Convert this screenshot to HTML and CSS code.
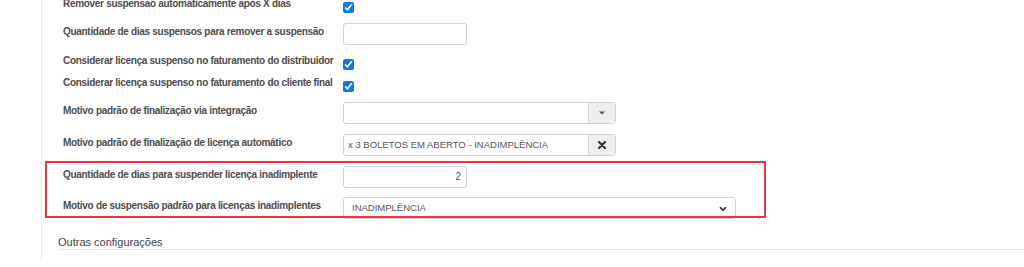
FILE: index.html
```html
<!DOCTYPE html>
<html lang="pt-BR">
<head>
<meta charset="utf-8">
<title>Configurações</title>
<link rel="stylesheet" href="styles.css">
</head>
<body>
<div class="panel">
  <div class="form">
    <div class="row row-check row-first gap-10">
      <label class="lbl">Remover suspensão automaticamente após X dias</label>
      <input type="checkbox" class="chk" checked>
    </div>
    <div class="row gap-7">
      <label class="lbl">Quantidade de dias suspensos para remover a suspensão</label>
      <div class="field field-sm"></div>
    </div>
    <div class="row row-check gap-4">
      <label class="lbl">Considerar licença suspenso no faturamento do distribuidor</label>
      <input type="checkbox" class="chk" checked>
    </div>
    <div class="row row-check gap-10">
      <label class="lbl">Considerar licença suspenso no faturamento do cliente final</label>
      <input type="checkbox" class="chk" checked>
    </div>
    <div class="row gap-10">
      <label class="lbl">Motivo padrão de finalização via integração</label>
      <div class="combo">
        <div class="combo-text"></div>
        <div class="combo-btn">
          <svg width="6" height="4" viewBox="0 0 6 4"><path d="M0 0.5h6L3 3.5z" fill="#555"/></svg>
        </div>
      </div>
    </div>
    <div class="row gap-10">
      <label class="lbl">Motivo padrão de finalização de licença automático</label>
      <div class="combo">
        <div class="combo-text">x 3 BOLETOS EM ABERTO - INADIMPLÊNCIA</div>
        <div class="combo-btn">
          <svg width="8" height="8" viewBox="0 0 8 8"><path d="M1 1L7 7M7 1L1 7" stroke="#333" stroke-width="2.2" stroke-linecap="round"/></svg>
        </div>
      </div>
    </div>
    <div class="row gap-9">
      <label class="lbl">Quantidade de dias para suspender licença inadimplente</label>
      <div class="field field-sm field-num">2</div>
    </div>
    <div class="row">
      <label class="lbl">Motivo de suspensão padrão para licenças inadimplentes</label>
      <div class="select">
        <span class="select-text">INADIMPLÊNCIA</span>
        <svg class="chev" width="8" height="6" viewBox="0 0 8 6"><path d="M1 1.2L4 4.2L7 1.2" fill="none" stroke="#444" stroke-width="1.8"/></svg>
      </div>
    </div>
  </div>
  <div class="section">Outras configurações</div>
  <div class="highlight"></div>
</div>
</body>
</html>
```

FILE: styles.css
```css
html, body {
  margin: 0;
  padding: 0;
  background: #fff;
  overflow: hidden;
}
body {
  width: 1024px;
  height: 267px;
  font-family: "Liberation Sans", Arial, sans-serif;
}
.panel {
  position: relative;
  margin-left: 41px;
  border-left: 1px solid #ececec;
  height: 267px;
  padding-left: 16px;
  box-sizing: border-box;
}
.form {
  padding-left: 5px;
}
.row {
  display: flex;
  align-items: flex-start;
}
.row-first {
  margin-top: -5px;
}
.gap-10 { margin-bottom: 10px; }
.gap-9 { margin-bottom: 9px; }
.gap-7 { margin-bottom: 7px; }
.gap-4 { margin-bottom: 4px; }
.lbl {
  width: 280px;
  flex: none;
  font-size: 10px;
  font-weight: bold;
  letter-spacing: -0.3px;
  line-height: 18px;
  color: #4d4d4d;
  white-space: nowrap;
}
.row-check {
  height: 18px;
}
.chk {
  margin: 7px 0 0 0;
  width: 11px;
  height: 11px;
  accent-color: #0b78f0;
}
.field {
  height: 22px;
  box-sizing: border-box;
  border: 1px solid #d2d2d2;
  border-radius: 3px;
  background: #fff;
}
.field-sm {
  width: 124px;
}
.field-num {
  text-align: right;
  font-size: 10px;
  line-height: 20px;
  color: #555;
  padding-right: 5px;
}
.combo {
  width: 273px;
  height: 22px;
  box-sizing: border-box;
  display: flex;
  border: 1px solid #d2d2d2;
  border-radius: 3px;
  overflow: hidden;
}
.combo-text {
  flex: 1;
  padding-left: 4px;
  font-size: 9.5px;
  line-height: 20px;
  color: #555;
  white-space: nowrap;
}
.combo-btn {
  width: 26px;
  flex: none;
  background: #eeeeee;
  border-left: 1px solid #d2d2d2;
  display: flex;
  align-items: center;
  justify-content: center;
}
.select {
  width: 393px;
  height: 22px;
  box-sizing: border-box;
  border: 1px solid #d2d2d2;
  border-radius: 3px;
  display: flex;
  align-items: center;
  justify-content: space-between;
  padding: 0 8px 0 8px;
}
.select-text {
  font-size: 9.5px;
  color: #555;
  line-height: 20px;
}
.chev {
  display: block;
  margin-top: 1px;
}
.section {
  margin-top: 16px;
  font-size: 11px;
  line-height: 14px;
  color: #444;
  border-bottom: 1px solid #e6e6e6;
}
.highlight {
  position: absolute;
  left: 3px;
  top: 166px;
  width: 721px;
  height: 57px;
  box-sizing: border-box;
  border: 2px solid #e5393d;
}
```
